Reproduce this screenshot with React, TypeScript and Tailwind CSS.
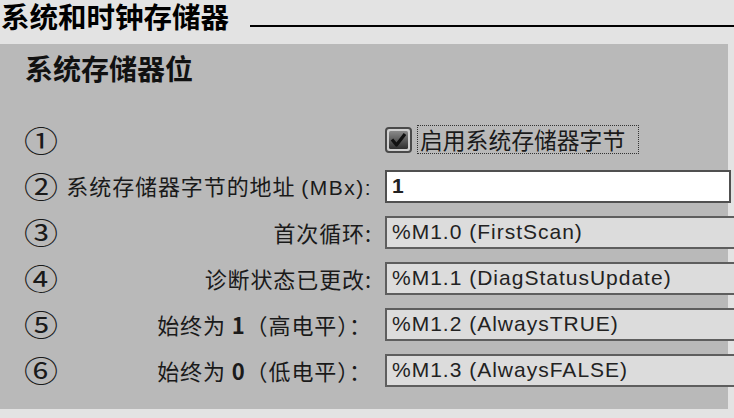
import type { ReactNode } from 'react';

const cjk = "font-['Noto_Sans_CJK_SC',sans-serif]";
const latin = "font-['Liberation_Sans','Noto_Sans_CJK_SC',sans-serif]";

const rows: { n: string; label: ReactNode; value: string }[] = [
  { n: '③', label: '首次循环:', value: '%M1.0 (FirstScan)' },
  { n: '④', label: '诊断状态已更改:', value: '%M1.1 (DiagStatusUpdate)' },
  {
    n: '⑤',
    label: (
      <>
        始终为 <span className="font-semibold">1</span>（高电平）：
      </>
    ),
    value: '%M1.2 (AlwaysTRUE)',
  },
  {
    n: '⑥',
    label: (
      <>
        始终为 <span className="font-semibold">0</span>（低电平）：
      </>
    ),
    value: '%M1.3 (AlwaysFALSE)',
  },
];

export default function App() {
  return (
    <div className={`flex h-[418px] w-[734px] flex-col overflow-hidden bg-[#e3e3e3] ${cjk}`}>
      <div className="flex h-[44px] shrink-0 items-start">
        <span className="w-[250px] shrink-0 pl-[1px] text-[28.5px] font-bold leading-[32px] text-black">
          系统和时钟存储器
        </span>
        <div className="mt-[25px] h-[2px] flex-1 bg-black" />
      </div>

      <div className="mr-[6px] h-[365px] shrink-0 bg-[#b9b9b9] pl-[25px] pt-[8px]">
        <h2 className="mb-[32px] text-[28px] font-bold leading-[32px] text-[#111]">系统存储器位</h2>

        <Row n="①" tall>
          <div className="flex items-center">
            <CheckBox />
            <span className="ml-[5px] h-[29px] w-[222px] border border-dotted border-[#333] pl-[2px] text-[22.8px] leading-[27px] text-[#1a1a1a]">
              启用系统存储器字节
            </span>
          </div>
        </Row>

        <Row
          n="②"
          label={
            <>
              系统存储器字节的地址{' '}
              <span className={`${latin} text-[21px] tracking-[1.5px]`}>(MBx):</span>
            </>
          }
        >
          <div
            className={`flex h-[33px] w-[346px] items-center border-2 border-[#505050] bg-white pl-[5px] text-[21px] font-semibold text-[#222] ${latin}`}
          >
            1
          </div>
        </Row>

        {rows.map((r) => (
          <Row key={r.n} n={r.n} label={r.label}>
            <div
              className={`flex h-[33px] w-[360px] items-center border-2 border-r-0 border-[#5e5e5e] bg-[#dcdcdc] pl-[5px] text-[21px] tracking-[1px] text-[#222] ${latin}`}
            >
              {r.value}
            </div>
          </Row>
        ))}
      </div>
    </div>
  );
}

function Row({
  n,
  label,
  tall = false,
  children,
}: {
  n: string;
  label?: ReactNode;
  tall?: boolean;
  children: ReactNode;
}) {
  return (
    <div
      className={`grid grid-cols-[30px_317px_1fr] items-center ${tall ? 'h-[47px]' : 'h-[46px]'}`}
    >
      <span className="-ml-[1px] block origin-left scale-y-[0.87] text-[34px] leading-none text-[#1a1a1a]">
        {n}
      </span>
      <span className="whitespace-nowrap text-right text-[22px] leading-none tracking-[0.9px] text-[#1a1a1a]">
        {label}
      </span>
      <div className="ml-[13px]">{children}</div>
    </div>
  );
}

function CheckBox() {
  return (
    <svg width="27" height="26" viewBox="0 0 27 26" className="shrink-0">
      <defs>
        <linearGradient id="cbg" x1="0" y1="0" x2="0" y2="1">
          <stop offset="0" stopColor="#8a8a8a" />
          <stop offset="1" stopColor="#2e2e2e" />
        </linearGradient>
      </defs>
      <rect x="1" y="1" width="25" height="24" rx="3" fill="#d0d0d0" stroke="#4a4a4a" strokeWidth="2" />
      <rect x="4" y="4" width="19" height="18" rx="1.5" fill="url(#cbg)" />
      <path d="M7 12.5 L11.5 18 L20 7" fill="none" stroke="#111" strokeWidth="3.2" strokeLinejoin="round" />
    </svg>
  );
}
